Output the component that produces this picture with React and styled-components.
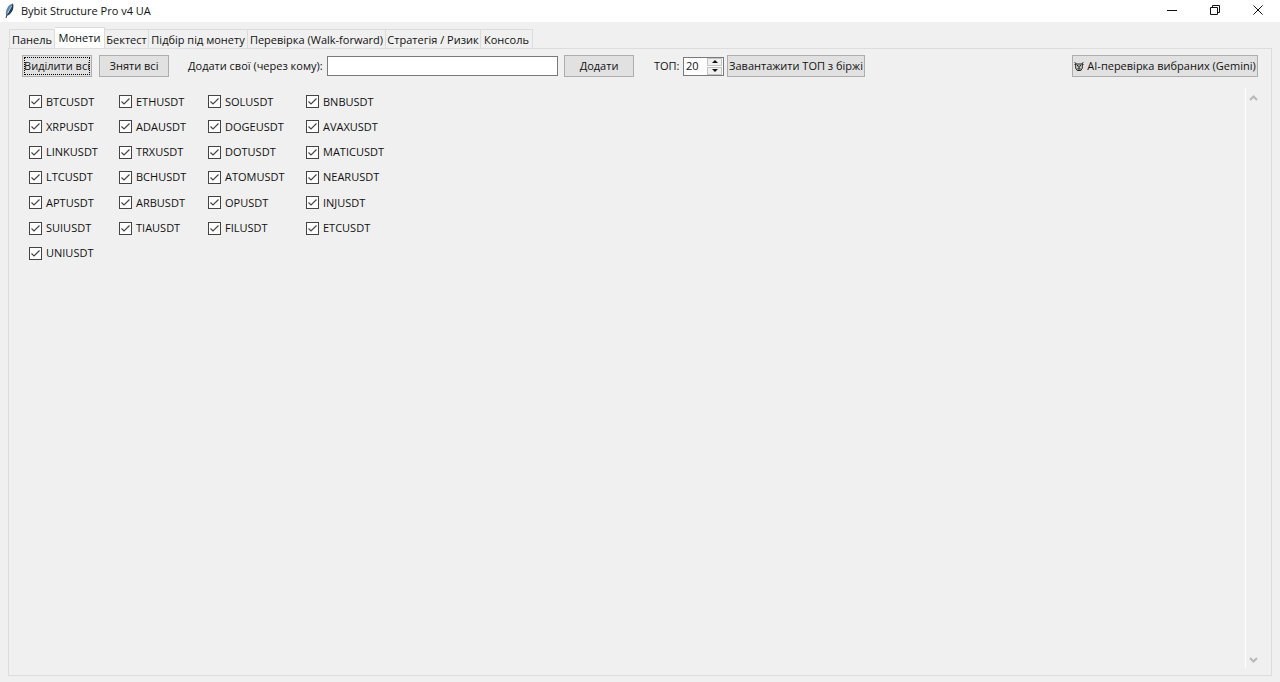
import React, { useState } from "react";
import styled, { createGlobalStyle } from "styled-components";

const GlobalStyle = createGlobalStyle`
  *, *::before, *::after { box-sizing: border-box; }
  body {
    margin: 0;
    background: #f0f0f0;
    color: #111;
    font-family: "Segoe UI", "Open Sans", "Noto Sans", sans-serif;
    font-size: 11px;
    line-height: 16px;
  }
  button, input { font: inherit; color: inherit; margin: 0; }
`;

const Window = styled.div`
  display: flex;
  flex-direction: column;
  min-height: 100vh;
`;

const TitleBar = styled.header`
  display: flex;
  align-items: center;
  height: 22px;
  padding: 0 1px 0 4px;
  background: #fff;
`;

const Title = styled.h1`
  flex: 1;
  margin: 0 0 0 6px;
  font-size: 11px;
  font-weight: 400;
`;

const WindowButton = styled.button`
  display: grid;
  place-items: center;
  width: 43px;
  height: 20px;
  padding: 0 0 2px;
  border: 0;
  background: none;
`;

const TabList = styled.nav`
  display: flex;
  align-items: flex-end;
  height: 26px;
  padding-left: 9px;
`;

const Tab = styled.button`
  width: ${(p) => p.$width}px;
  height: ${(p) => (p.$active ? 22 : 19)}px;
  margin-bottom: ${(p) => (p.$active ? -1 : 0)}px;
  padding: ${(p) => (p.$active ? "0 0 1px" : "1px 0 0")};
  border: 1px solid #dcdcdc;
  border-bottom: 0;
  border-left-width: ${(p) => (p.$first ? 1 : 0)}px;
  background: ${(p) => (p.$active ? "#fff" : "#f0f0f0")};
  white-space: nowrap;
`;

const Panel = styled.main`
  flex: 1;
  display: flex;
  flex-direction: column;
  margin: 0 8px 6px;
  padding: 6px 13px 7px;
  border: 1px solid #dcdcdc;
`;

const Toolbar = styled.div`
  display: flex;
  align-items: center;
  height: 22px;
`;

const ButtonPair = styled.div`
  display: flex;
  gap: 7px;
`;

const Button = styled.button`
  display: flex;
  align-items: center;
  justify-content: center;
  gap: 3px;
  width: ${(p) => p.$width}px;
  height: 22px;
  padding: 0;
  border: 1px solid #adadad;
  background: #e1e1e1;
  white-space: nowrap;
  outline: ${(p) => (p.$focused ? "1px dotted #000" : "none")};
  outline-offset: -3px;
`;

const AddField = styled.div`
  display: flex;
  align-items: center;
  justify-content: space-between;
  width: 370px;
  margin: 0 6px 0 19px;
`;

const TextInput = styled.input`
  width: 231px;
  height: 20px;
  padding: 0 4px;
  border: 1px solid #7a7a7a;
  border-radius: 0;
  background: #fff;
`;

const TopField = styled.div`
  display: flex;
  align-items: center;
  justify-content: space-between;
  width: 70px;
  margin: 0 3px 0 20px;
`;

const SpinBox = styled.div`
  display: flex;
  width: 41px;
  height: 19px;
  padding-right: 1px;
  border: 1px solid #7a7a7a;
  background: #fff;
`;

const SpinInput = styled.input`
  flex: 1;
  min-width: 0;
  height: 16px;
  padding: 0 0 0 2px;
  border: 0;
  outline: 0;
  background: none;
  appearance: textfield;
  &::-webkit-inner-spin-button { appearance: none; margin: 0; }
`;

const SpinButtons = styled.div`
  display: flex;
  flex-direction: column;
  justify-content: center;
  gap: 1px;
`;

const SpinButton = styled.button`
  display: grid;
  place-items: center;
  width: 15px;
  height: 8px;
  padding: 0;
  border: 1px solid #c4c4c4;
  background: #f0f0f0;
`;

const Spacer = styled.div`
  flex: 1;
`;

const ListArea = styled.section`
  flex: 1;
  display: flex;
  margin-top: 11px;
`;

const CoinGrid = styled.div`
  flex: 1;
  display: grid;
  grid-template-columns: 90px 89px 98px 100px;
  grid-template-rows: repeat(7, 1fr);
  align-items: center;
  align-self: flex-start;
  height: 177px;
  margin-top: 1px;
  padding-left: 7px;
`;

const CoinLabel = styled.label`
  display: flex;
  align-items: center;
  gap: 4px;
`;

const CheckFrame = styled.span`
  display: grid;
  width: 13px;
  height: 13px;
  & > * { grid-area: 1 / 1; }
  svg { pointer-events: none; visibility: hidden; }
  input:checked + svg { visibility: visible; }
`;

const CheckInput = styled.input`
  appearance: none;
  width: 13px;
  height: 13px;
  border: 1px solid #444;
  background: #fff;
`;

const ScrollTrack = styled.div`
  display: flex;
  flex-direction: column;
  justify-content: space-between;
  width: 13px;
  padding: 5px 0 3px;
  border-left: 1px solid #fff;
`;

const ScrollButton = styled.button`
  display: grid;
  place-items: center;
  height: 10px;
  padding: 0 0 0 2px;
  border: 0;
  background: none;
`;

const TABS = [
  ["Панель", 46],
  ["Монети", 50],
  ["Бектест", 44],
  ["Підбір під монету", 99],
  ["Перевірка (Walk-forward)", 138],
  ["Стратегія / Ризик", 95],
  ["Консоль", 52],
];

const COINS = [
  "BTCUSDT", "ETHUSDT", "SOLUSDT", "BNBUSDT",
  "XRPUSDT", "ADAUSDT", "DOGEUSDT", "AVAXUSDT",
  "LINKUSDT", "TRXUSDT", "DOTUSDT", "MATICUSDT",
  "LTCUSDT", "BCHUSDT", "ATOMUSDT", "NEARUSDT",
  "APTUSDT", "ARBUSDT", "OPUSDT", "INJUSDT",
  "SUIUSDT", "TIAUSDT", "FILUSDT", "ETCUSDT",
  "UNIUSDT",
];

const FeatherIcon = () => (
  <svg width="11" height="18" viewBox="0 0 11 18" aria-hidden="true">
    <path d="M8.4 1.6C4.6 3 1.8 7 1.8 11.8L3.2 13.6C7 12.4 9.8 7.4 9.2 2Z" fill="#5f86a8" />
    <path d="M8.8 1.8C10.4 5.6 8.6 11.2 3.2 13.8L5.6 8Z" fill="#253c56" />
    <path d="M7.6 4L3.6 11.4" stroke="#b7d0e4" strokeWidth="1" />
    <path d="M3.2 11.8L2 16" stroke="#333" strokeWidth="1" />
  </svg>
);

const RobotIcon = () => (
  <svg width="10" height="12" viewBox="0 0 10 12" fill="none" stroke="#222" aria-hidden="true">
    <path d="M.8 2.2L2.2 4.2M9.2 2.2L7.8 4.2M.5 4.5H2M8 4.5H9.5" />
    <path d="M1.7 4H8.3V8.2L6.8 10.5H3.2L1.7 8.2Z" fill="#d5d5cc" />
    <path d="M3 5.7H4.3M5.7 5.7H7M5 6V8M3.4 8.8H6.6" strokeWidth="1.2" />
  </svg>
);

function Chevron({ down }) {
  return (
    <svg width="9" height="6" viewBox="0 0 9 6" aria-hidden="true">
      <path d={down ? "M1 1L4.5 4.5L8 1" : "M1 5L4.5 1.5L8 5"} fill="none" stroke="#b8b8b8" strokeWidth="2" />
    </svg>
  );
}

function Arrow({ down }) {
  return (
    <svg width="6" height="3" viewBox="0 0 6 3" aria-hidden="true">
      <path d={down ? "M0 0H6L3 3Z" : "M0 3H6L3 0Z"} fill="#111" />
    </svg>
  );
}

export default function App() {
  const [active, setActive] = useState(1);
  const [selected, setSelected] = useState(new Set(COINS));
  const [top, setTop] = useState(20);

  const toggle = (coin) => {
    const next = new Set(selected);
    next.has(coin) ? next.delete(coin) : next.add(coin);
    setSelected(next);
  };

  return (
    <>
      <GlobalStyle />
      <Window>
        <TitleBar>
          <FeatherIcon />
          <Title>Bybit Structure Pro v4 UA</Title>
          <WindowButton aria-label="Minimize">
            <svg width="10" height="10" viewBox="0 0 10 10"><path d="M0 5.5H10" stroke="#111" /></svg>
          </WindowButton>
          <WindowButton aria-label="Restore">
            <svg width="10" height="10" viewBox="0 0 10 10" fill="none" stroke="#111">
              <path d="M.5 2.5H7.5V9.5H.5ZM2.5 2V.5H9.5V7.5H8" />
            </svg>
          </WindowButton>
          <WindowButton aria-label="Close">
            <svg width="10" height="10" viewBox="0 0 10 10"><path d="M.5 .5L9.5 9.5M9.5 .5L.5 9.5" stroke="#111" /></svg>
          </WindowButton>
        </TitleBar>
        <TabList role="tablist">
          {TABS.map(([name, width], i) => (
            <Tab
              key={name}
              role="tab"
              aria-selected={i === active}
              $width={width}
              $active={i === active}
              $first={i === 0}
              onClick={() => setActive(i)}
            >
              {name}
            </Tab>
          ))}
        </TabList>
        <Panel>
          <Toolbar>
            <ButtonPair>
              <Button $width={70} $focused onClick={() => setSelected(new Set(COINS))}>Виділити всі</Button>
              <Button $width={70} onClick={() => setSelected(new Set())}>Зняти всі</Button>
            </ButtonPair>
            <AddField>
              <label htmlFor="custom">Додати свої (через кому):</label>
              <TextInput id="custom" type="text" />
            </AddField>
            <Button $width={70}>Додати</Button>
            <TopField>
              <label htmlFor="top">ТОП:</label>
              <SpinBox>
                <SpinInput id="top" type="number" value={top} onChange={(e) => setTop(Number(e.target.value))} />
                <SpinButtons>
                  <SpinButton aria-label="Більше" onClick={() => setTop(top + 1)}><Arrow /></SpinButton>
                  <SpinButton aria-label="Менше" onClick={() => setTop(top - 1)}><Arrow down /></SpinButton>
                </SpinButtons>
              </SpinBox>
            </TopField>
            <Button $width={138}>Завантажити ТОП з біржі</Button>
            <Spacer />
            <Button $width={186}><RobotIcon />AI-перевірка вибраних (Gemini)</Button>
          </Toolbar>
          <ListArea>
            <CoinGrid>
              {COINS.map((coin) => (
                <CoinLabel key={coin}>
                  <CheckFrame>
                    <CheckInput type="checkbox" checked={selected.has(coin)} onChange={() => toggle(coin)} />
                    <svg width="13" height="13" viewBox="0 0 13 13" aria-hidden="true">
                      <path d="M2.5 6.5L5 9L10.5 3.5" fill="none" stroke="#444" strokeWidth="1.2" />
                    </svg>
                  </CheckFrame>
                  {coin}
                </CoinLabel>
              ))}
            </CoinGrid>
            <ScrollTrack>
              <ScrollButton aria-label="Вгору"><Chevron /></ScrollButton>
              <ScrollButton aria-label="Вниз"><Chevron down /></ScrollButton>
            </ScrollTrack>
          </ListArea>
        </Panel>
      </Window>
    </>
  );
}
